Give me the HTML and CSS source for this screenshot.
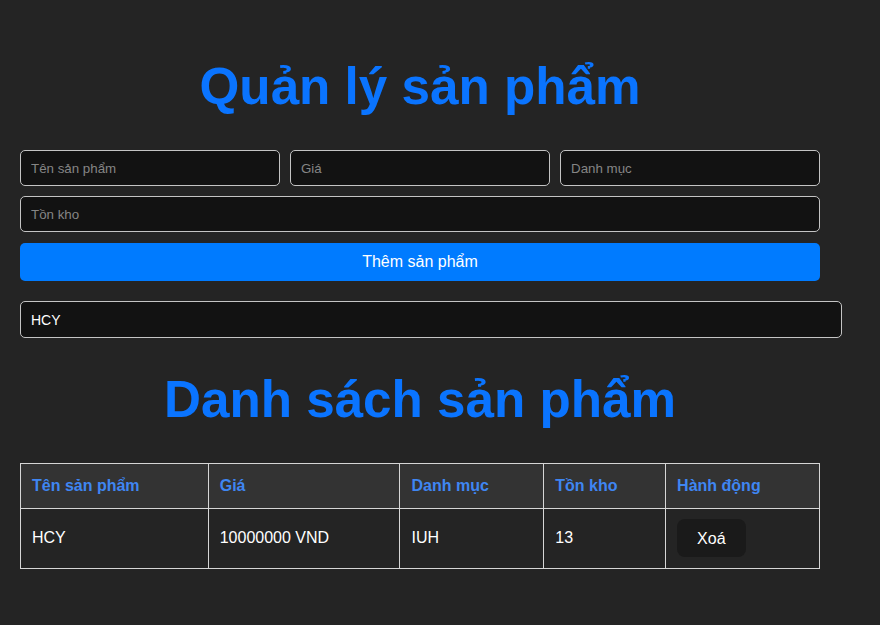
FILE: index.html
```html
<!DOCTYPE html>
<html lang="vi">
<head>
<meta charset="utf-8">
<title>Quản lý sản phẩm</title>
<link rel="stylesheet" href="styles.css">
</head>
<body>
<div class="app">
  <h1 class="title">Quản lý sản phẩm</h1>
  <div class="form">
    <div class="row">
      <input class="field" type="text" placeholder="Tên sản phẩm">
      <input class="field" type="text" placeholder="Giá">
      <input class="field" type="text" placeholder="Danh mục">
    </div>
    <div class="row">
      <input class="field" type="text" placeholder="Tồn kho">
    </div>
    <button class="add-btn">Thêm sản phẩm</button>
  </div>
  <input class="search" type="text" value="HCY">
  <h1 class="title title-2">Danh sách sản phẩm</h1>
  <table class="table">
    <colgroup>
      <col class="c1"><col class="c2"><col class="c3"><col class="c4"><col class="c5">
    </colgroup>
    <thead>
      <tr><th>Tên sản phẩm</th><th>Giá</th><th>Danh mục</th><th>Tồn kho</th><th>Hành động</th></tr>
    </thead>
    <tbody>
      <tr><td>HCY</td><td>10000000 VND</td><td>IUH</td><td>13</td><td><button class="del-btn">Xoá</button></td></tr>
    </tbody>
  </table>
</div>
</body>
</html>
```

FILE: styles.css
```css
* { box-sizing: border-box; }
html, body {
  margin: 0;
  padding: 0;
  background: #242424;
  color: rgba(255,255,255,0.87);
  font-family: "Liberation Sans", Arial, sans-serif;
}
.app {
  width: 840px;
  padding: 25px 20px 20px;
}
.title {
  font-size: 51.2px;
  line-height: 1.1;
  font-weight: 700;
  color: #0a74ff;
  text-align: center;
  margin: 34px 0 35px;
  width: 800px;
}
.form {
  display: flex;
  flex-direction: column;
  gap: 10px;
  width: 800px;
}
.row {
  display: flex;
  gap: 10px;
}
.field {
  flex: 1;
  height: 36px;
  padding: 10px;
  background: #121212;
  border: 1px solid #c4c4c4;
  border-radius: 5px;
  color: #fff;
  font-family: "Liberation Sans", Arial, sans-serif;
  font-size: 13.33px;
  outline: none;
}
.field::placeholder { color: #858585; }
.add-btn {
  margin-top: 1px;
  height: 38px;
  width: 100%;
  border: none;
  border-radius: 5px;
  background: #007bff;
  color: #fff;
  font-family: "Liberation Sans", Arial, sans-serif;
  font-size: 16px;
  padding: 0;
}
.search {
  display: block;
  margin-top: 20px;
  width: 822px;
  height: 37px;
  padding: 10px;
  background: #121212;
  border: 1px solid #c4c4c4;
  border-radius: 5px;
  color: #fff;
  font-family: "Liberation Sans", Arial, sans-serif;
  font-size: 14px;
  outline: none;
}
.title-2 { margin-top: 34px; margin-bottom: 34px; }
.table {
  width: 800px;
  border-collapse: collapse;
  font-size: 16px;
}
.c1 { width: 188px; }
.c2 { width: 192px; }
.c3 { width: 144px; }
.c4 { width: 122px; }
.c5 { width: 154px; }
.table th, .table td {
  border: 1px solid #d6d6d6;
  text-align: left;
  padding: 0 10px 0 11px;
}
.table th {
  background: #333333;
  color: #3f86f2;
  font-weight: 700;
  height: 45px;
}
.table td {
  color: #fff;
  height: 60px;
}
.del-btn {
  background: #1a1a1a;
  color: #fff;
  border: none;
  border-radius: 8px;
  padding: 9.6px 20px;
  font-family: "Liberation Sans", Arial, sans-serif;
  font-size: 16px;
  line-height: 19px;
}
```
